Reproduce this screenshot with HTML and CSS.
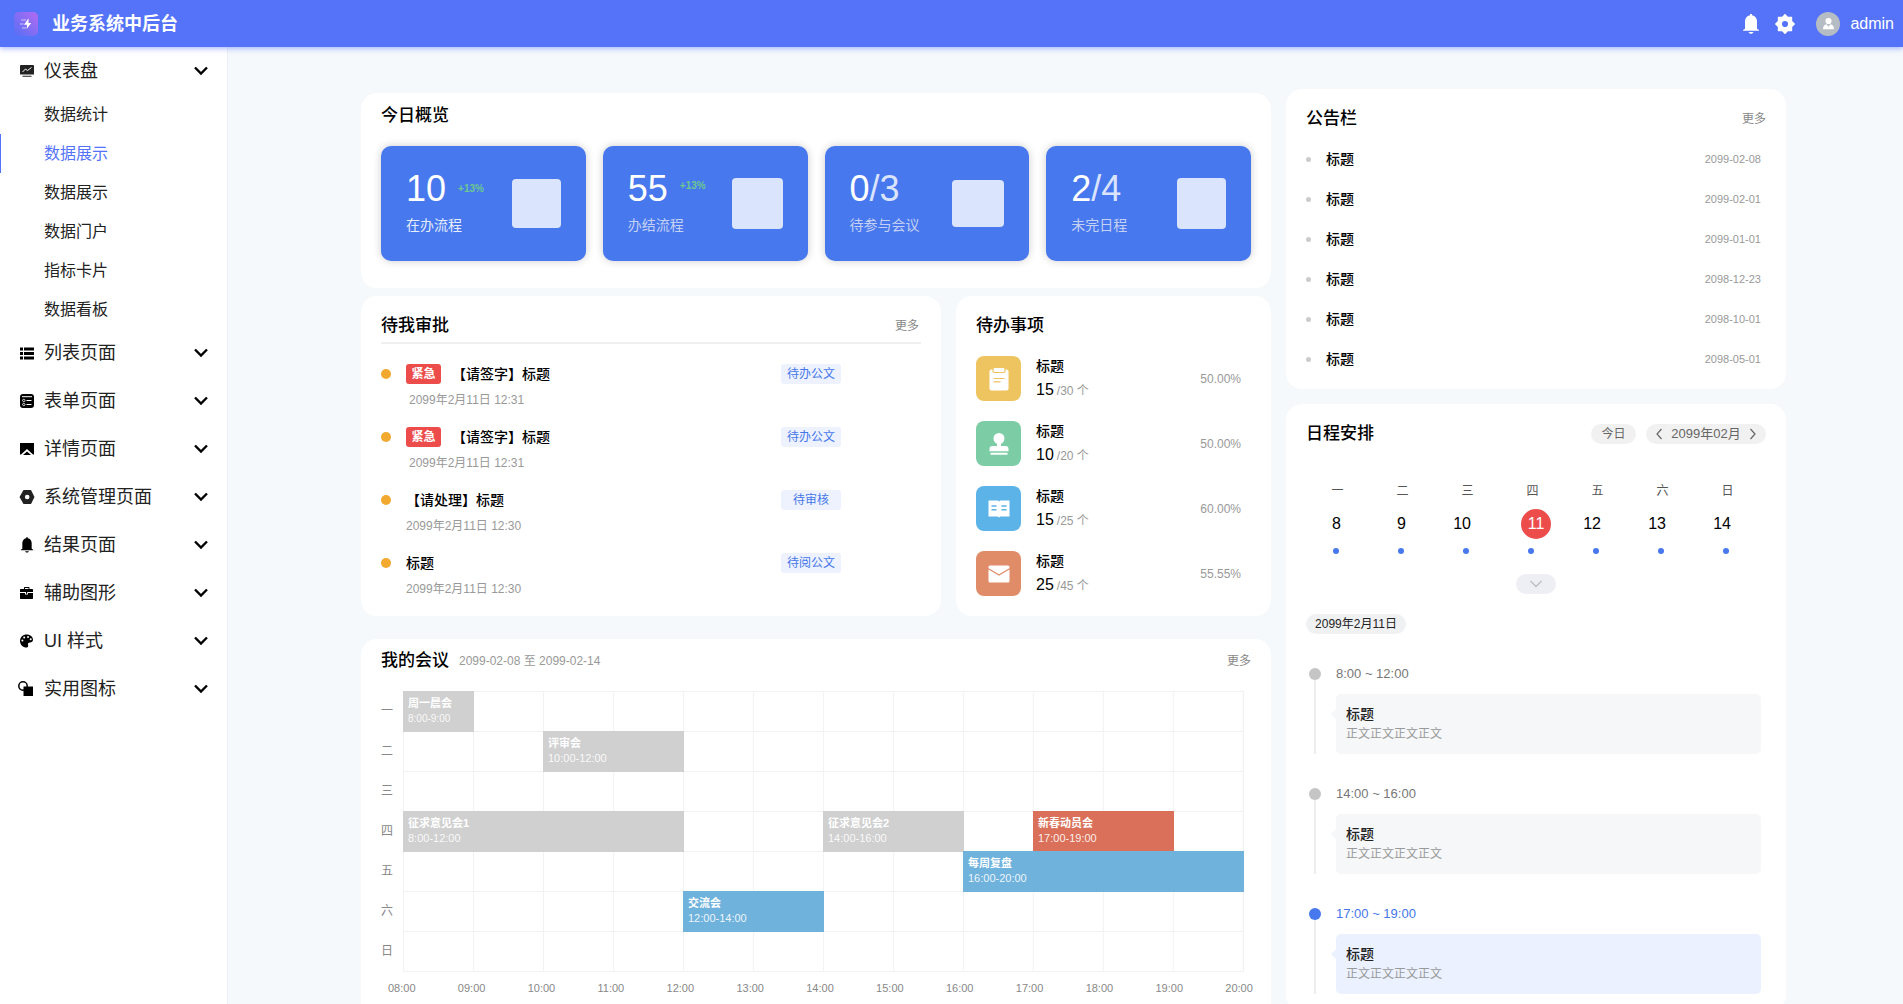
FILE: index.html
```html
<!DOCTYPE html>
<html lang="zh-CN">
<head>
<meta charset="utf-8">
<meta name="viewport" content="width=device-width, initial-scale=1">
<title>业务系统中后台</title>
<link rel="stylesheet" href="styles.css">
</head>
<body>
<svg width="0" height="0" class="sprite" aria-hidden="true">
  <symbol id="chevron" viewBox="0 0 14 10"><path d="M1 1.5 7 7.5 13 1.5" fill="none" stroke="currentColor" stroke-width="2.4"/></symbol>
  <symbol id="bell" viewBox="0 0 18 20"><path d="M8 0h2v1.3c3.300.6 5 3.200 5 6.200v7.200l2 1.300v.8H1V16l2-1.300V7.500C3 4.500 4.700 1.900 8 1.300zM6.500 18h5c-.5 1.200-1.400 1.800-2.500 1.800S7 19.200 6.500 18z" fill="currentColor"/></symbol>
</svg>

<header class="topbar">
  <svg class="logo" viewBox="0 0 24 24" aria-hidden="true">
    <defs><linearGradient id="logo-bg" x1="0" y1="1" x2="1" y2="0"><stop offset="0" stop-color="#5470f5"/><stop offset="1" stop-color="#b46af2"/></linearGradient></defs>
    <rect width="24" height="24" rx="5" fill="url(#logo-bg)"/>
    <path d="M7 8h5M6 12h3.500M8 16h4" stroke="#fff" stroke-opacity=".4" stroke-width="1.400"/>
    <path d="M14.500 6.200 10 12.800h3L12.700 17l4.500-6h-2.700z" fill="#fff"/>
  </svg>
  <h1 class="brand">业务系统中后台</h1>
  <div class="topbar-actions">
    <button class="icon-btn" aria-label="通知"><svg width="18" height="20"><use href="#bell"/></svg></button>
    <button class="icon-btn" aria-label="设置"><svg width="20" height="20" viewBox="0 0 20 20"><path fill="currentColor" stroke="currentColor" stroke-linejoin="round" stroke-width="1.500" fill-rule="evenodd" d="M10 .8 12.600 3.600 16.500 3.500 16.400 7.400 19.200 10 16.400 12.600 16.500 16.500 12.600 16.400 10 19.200 7.400 16.400 3.500 16.500 3.600 12.600.8 10 3.600 7.400 3.500 3.500 7.400 3.600zM10 6.200a3.800 3.800 0 1 0 0 7.600 3.800 3.800 0 0 0 0-7.600z"/></svg></button>
    <a class="user" href="#">
      <svg width="24" height="24" viewBox="0 0 24 24" aria-hidden="true"><circle cx="12" cy="12" r="12" fill="#b6bcc3"/><circle cx="12.500" cy="9" r="3.100" fill="#fff"/><path d="M7 17.200c0-3 1.500-4.700 3.500-4.900l2 2.500 2-2.500c2 .2 3.500 1.900 3.500 4.900z" fill="#fff"/></svg>
      <span>admin</span>
    </a>
  </div>
</header>

<div class="shell">
  <nav class="sidebar">
    <button class="menu-group"><svg class="menu-icon" viewBox="0 0 14 14"><path d="M1 1h12a1 1 0 0 1 1 1v8.500H0V2a1 1 0 0 1 1-1zM2.500 11.800h9v1h-9z" fill="#222"/><path d="M2.500 8 5.500 5 7.500 6.500 11.500 3.500" fill="none" stroke="#fff"/></svg><span>仪表盘</span><svg class="menu-arrow"><use href="#chevron"/></svg></button>
    <div class="submenu">
      <a href="#">数据统计</a>
      <a href="#" class="active">数据展示</a>
      <a href="#">数据展示</a>
      <a href="#">数据门户</a>
      <a href="#">指标卡片</a>
      <a href="#">数据看板</a>
    </div>
    <button class="menu-group"><svg class="menu-icon" viewBox="0 0 14 14"><path d="M0 1.500h3v3H0zM4 1.500h10v3H4zM0 6h3v3H0zM4 6h10v3H4zM0 10.500h3v3H0zM4 10.500h10v3H4z"/></svg><span>列表页面</span><svg class="menu-arrow"><use href="#chevron"/></svg></button>
    <button class="menu-group"><svg class="menu-icon" viewBox="0 0 14 14"><rect width="14" height="14" rx="3"/><path d="M2 2.700h10M6.500 6.500h5M6.500 10.500h5" stroke="#fff"/><circle cx="3.800" cy="6.500" r="1.200" fill="none" stroke="#fff" stroke-width=".8"/><circle cx="3.800" cy="10.500" r="1.200" fill="none" stroke="#fff" stroke-width=".8"/></svg><span>表单页面</span><svg class="menu-arrow"><use href="#chevron"/></svg></button>
    <button class="menu-group"><svg class="menu-icon" viewBox="0 0 14 14"><path d="M0 1h14v11.500h-1L7 7 1 12.500H0zM3 13l4-3.500 4 3.500z"/></svg><span>详情页面</span><svg class="menu-arrow"><use href="#chevron"/></svg></button>
    <button class="menu-group"><svg class="menu-icon" viewBox="0 0 14 14"><path fill="#222" fill-rule="evenodd" d="M3.500 0h7.500l3.500 7-3.500 7H3.500L-.5 7zM7.200 4.700a2.300 2.300 0 1 0 0 4.600 2.300 2.300 0 0 0 0-4.600z"/></svg><span>系统管理页面</span><svg class="menu-arrow"><use href="#chevron"/></svg></button>
    <button class="menu-group"><svg class="menu-icon menu-icon-tall"><use href="#bell"/></svg><span>结果页面</span><svg class="menu-arrow"><use href="#chevron"/></svg></button>
    <button class="menu-group"><svg class="menu-icon" viewBox="0 0 14 14"><path fill-rule="evenodd" d="M4 3V2c0-.6.400-1 1-1h3.500c.6 0 1 .4 1 1v1H12c.6 0 1 .4 1 1v2H0V4c0-.6.400-1 1-1zm1 0h3.500V2H5zM0 7h5v1.500h3V7h5v5c0 .6-.4 1-1 1H1c-.6 0-1-.4-1-1z"/><path d="M6 6h1.200v1.800H6z"/></svg><span>辅助图形</span><svg class="menu-arrow"><use href="#chevron"/></svg></button>
    <button class="menu-group"><svg class="menu-icon" viewBox="0 0 14 14"><path d="M6.500.5C10.500.5 13 3 13 5.800c0 2-1.500 2.700-3 2.700-1.500 0-2.500 1-2 2.200.5 1.300.2 2.800-1.500 2.800C3 13.500 0 10.800 0 7S3 .5 6.500.5z"/><g fill="#fff"><circle cx="2.400" cy="6.500" r="1"/><circle cx="4.200" cy="3.400" r="1"/><circle cx="8" cy="2.900" r="1"/><circle cx="10.700" cy="5.300" r="1"/></g></svg><span>UI 样式</span><svg class="menu-arrow"><use href="#chevron"/></svg></button>
    <button class="menu-group"><svg class="menu-icon" viewBox="0 0 14 14"><circle cx="3" cy="4" r="4.200" fill="#fff" stroke="#000" stroke-width="1.500"/><path d="M3.500 4.500H13V14H3.500z"/></svg><span>实用图标</span><svg class="menu-arrow"><use href="#chevron"/></svg></button>
  </nav>

  <main class="content">
    <div class="board">
      <div class="primary">
        <section class="card overview">
          <h2>今日概览</h2>
          <div class="stats">
            <div class="stat"><div class="stat-text"><p class="stat-value">10<small>+13%</small></p><p class="stat-label bright">在办流程</p></div><span class="thumb thumb-small"></span></div>
            <div class="stat"><div class="stat-text"><p class="stat-value">55<small class="raised">+13%</small></p><p class="stat-label">办结流程</p></div><span class="thumb thumb-large"></span></div>
            <div class="stat"><div class="stat-text"><p class="stat-value">0<span>/3</span></p><p class="stat-label">待参与会议</p></div><span class="thumb thumb-wide"></span></div>
            <div class="stat"><div class="stat-text"><p class="stat-value">2<span>/4</span></p><p class="stat-label">未完日程</p></div><span class="thumb thumb-tall"></span></div>
          </div>
        </section>

        <div class="pair">
          <section class="card approvals">
            <div class="card-head ruled"><h2>待我审批</h2><a class="more" href="#">更多</a></div>
            <ul class="approval-list">
              <li><i class="dot"></i><div class="approval-main"><p class="approval-title"><b class="urgent">紧急</b>【请签字】标题</p><time class="inset">2099年2月11日 12:31</time></div><span class="status">待办公文</span></li>
              <li><i class="dot"></i><div class="approval-main"><p class="approval-title"><b class="urgent">紧急</b>【请签字】标题</p><time class="inset">2099年2月11日 12:31</time></div><span class="status">待办公文</span></li>
              <li><i class="dot"></i><div class="approval-main"><p class="approval-title">【请处理】标题</p><time>2099年2月11日 12:30</time></div><span class="status">待审核</span></li>
              <li><i class="dot"></i><div class="approval-main"><p class="approval-title">标题</p><time>2099年2月11日 12:30</time></div><span class="status">待阅公文</span></li>
            </ul>
          </section>

          <section class="card todos">
            <h2>待办事项</h2>
            <ul class="todo-list">
              <li><span class="tile yellow"><svg viewBox="0 0 24 24"><rect x="2.500" y="2.500" width="19" height="21" rx="2" fill="#fff"/><rect x="6" y=".5" width="12" height="5" rx="1.500" fill="#fff" stroke="#eec460" stroke-width="1.200"/><path d="M6.500 11.500h11M6.500 14.800h7" stroke="#eec460" stroke-width="1.200"/></svg></span><div class="todo-main"><p class="todo-title">标题</p><p class="todo-count"><strong>15</strong>/30 个</p></div><span class="percent">50.00%</span></li>
              <li><span class="tile green"><svg viewBox="0 0 24 24"><circle cx="12" cy="6.500" r="5.500" fill="#fff"/><path d="M10 9h4v5h4.500a3 3 0 0 1 3 3v2.200h-19V17a3 3 0 0 1 3-3H10zM3.500 20.800h17v2h-17z" fill="#fff"/></svg></span><div class="todo-main"><p class="todo-title">标题</p><p class="todo-count"><strong>10</strong>/20 个</p></div><span class="percent">50.00%</span></li>
              <li><span class="tile blue"><svg viewBox="0 0 24 24"><path d="M1.500 3.500h8.500c1 0 1.700.5 2 1.200.3-.7 1-1.200 2-1.200h8.500v16H14c-.8 0-1.300.5-2 1-.7-.5-1.200-1-2-1H1.500z" fill="#fff"/><path d="M4.500 9h5M14.500 9h5M4.500 12.700h5M14.500 12.700h5" stroke="#5cb3e8" stroke-width="1.400"/></svg></span><div class="todo-main"><p class="todo-title">标题</p><p class="todo-count"><strong>15</strong>/25 个</p></div><span class="percent">60.00%</span></li>
              <li><span class="tile orange"><svg viewBox="0 0 24 24"><rect x="1.500" y="3.500" width="21" height="17" rx="1.500" fill="#fff"/><path d="M1 6.500l11 6.500 11-6.500" fill="none" stroke="#e08c69" stroke-width="1.300"/></svg></span><div class="todo-main"><p class="todo-title">标题</p><p class="todo-count"><strong>25</strong>/45 个</p></div><span class="percent">55.55%</span></li>
            </ul>
          </section>
        </div>

        <section class="card meetings">
          <div class="card-head"><h2>我的会议</h2><span class="range">2099-02-08 至 2099-02-14</span><a class="more" href="#">更多</a></div>
          <div class="planner">
            <div class="days"><span>一</span><span>二</span><span>三</span><span>四</span><span>五</span><span>六</span><span>日</span></div>
            <div class="slots">
              <div class="event mon"><b>周一晨会</b><span class="compact">8:00-9:00</span></div>
              <div class="event tue"><b>评审会</b><span>10:00-12:00</span></div>
              <div class="event thu-am"><b>征求意见会1</b><span>8:00-12:00</span></div>
              <div class="event thu-pm"><b>征求意见会2</b><span>14:00-16:00</span></div>
              <div class="event red thu-late"><b>新春动员会</b><span>17:00-19:00</span></div>
              <div class="event sky fri"><b>每周复盘</b><span>16:00-20:00</span></div>
              <div class="event sky sat"><b>交流会</b><span>12:00-14:00</span></div>
            </div>
          </div>
          <div class="hours"><span>08:00</span><span>09:00</span><span>10:00</span><span>11:00</span><span>12:00</span><span>13:00</span><span>14:00</span><span>15:00</span><span>16:00</span><span>17:00</span><span>18:00</span><span>19:00</span><span>20:00</span></div>
        </section>
      </div>

      <aside class="secondary">
        <section class="card notices">
          <div class="card-head"><h2>公告栏</h2><a class="more" href="#">更多</a></div>
          <ul class="notice-list">
            <li><a href="#">标题</a><time>2099-02-08</time></li>
            <li><a href="#">标题</a><time>2099-02-01</time></li>
            <li><a href="#">标题</a><time>2099-01-01</time></li>
            <li><a href="#">标题</a><time>2098-12-23</time></li>
            <li><a href="#">标题</a><time>2098-10-01</time></li>
            <li><a href="#">标题</a><time>2098-05-01</time></li>
          </ul>
        </section>

        <section class="card agenda">
          <div class="card-head">
            <h2>日程安排</h2>
            <button class="pill today">今日</button>
            <div class="pill month">
              <button class="step" aria-label="上个月"><svg width="6" height="12" viewBox="0 0 6 12"><path d="M5.500 1 1 6l4.500 5" fill="none" stroke="currentColor" stroke-width="1.200"/></svg></button>
              <span>2099年02月</span>
              <button class="step" aria-label="下个月"><svg width="6" height="12" viewBox="0 0 6 12"><path d="M.5 1 5 6 .5 11" fill="none" stroke="currentColor" stroke-width="1.200"/></svg></button>
            </div>
          </div>
          <div class="week">
            <div class="day"><span class="weekday">一</span><span class="num">8</span><i></i></div>
            <div class="day"><span class="weekday">二</span><span class="num">9</span><i></i></div>
            <div class="day"><span class="weekday">三</span><span class="num">10</span><i></i></div>
            <div class="day"><span class="weekday">四</span><span class="num current">11</span><i></i></div>
            <div class="day"><span class="weekday">五</span><span class="num">12</span><i></i></div>
            <div class="day"><span class="weekday">六</span><span class="num">13</span><i></i></div>
            <div class="day"><span class="weekday">日</span><span class="num">14</span><i></i></div>
          </div>
          <button class="expand" aria-label="展开"><svg width="12" height="8" viewBox="0 0 12 8"><path d="M.5 1 6 6.500 11.500 1" fill="none" stroke="#bcbcc4" stroke-width="1.300"/></svg></button>
          <span class="date-pill">2099年2月11日</span>
          <ol class="timeline">
            <li><time>8:00 ~ 12:00</time><div class="entry"><h3>标题</h3><p>正文正文正文正文</p></div></li>
            <li><time>14:00 ~ 16:00</time><div class="entry"><h3>标题</h3><p>正文正文正文正文</p></div></li>
            <li class="now"><time>17:00 ~ 19:00</time><div class="entry"><h3>标题</h3><p>正文正文正文正文</p></div></li>
          </ol>
        </section>
      </aside>
    </div>
  </main>
</div>
</body>
</html>
```
FILE: styles.css
```css
* { box-sizing: border-box; }

body {
  margin: 0;
  height: 100vh;
  display: flex;
  flex-direction: column;
  overflow: hidden;
  background: #f5f9fc;
  color: #000;
  font: 14px/20px "Liberation Sans", "Noto Sans CJK SC", sans-serif;
}

h1, h2, h3, p, ul, ol { margin: 0; padding: 0; }
ul, ol { list-style: none; }
a { color: inherit; text-decoration: none; }
button { margin: 0; padding: 0; border: 0; background: none; color: inherit; font: inherit; cursor: pointer; }
svg { display: block; }
.sprite { position: absolute; }

/* top bar */
.topbar {
  display: flex;
  flex: none;
  align-items: center;
  height: 47px;
  padding: 0 9px 0 14px;
  background: #5473f9;
  color: #fff;
  box-shadow: 0 1px 6px rgba(84, 115, 249, .6);
  z-index: 1;
}
.logo { width: 24px; height: 24px; margin-right: 14px; }
.brand { font-size: 18px; line-height: 24px; font-weight: 700; }
.topbar-actions { display: flex; align-items: center; gap: 15px; margin-left: auto; }
.user { display: flex; align-items: center; gap: 10px; margin-left: 6px; font-size: 16px; }

.shell { display: flex; flex: 1; min-height: 0; }

/* side menu */
.sidebar {
  flex: none;
  width: 228px;
  border-right: 1px solid #edf0f5;
  background: #fff;
  overflow: hidden;
}
.menu-group {
  display: flex;
  align-items: center;
  gap: 10px;
  width: 100%;
  height: 48px;
  padding: 0 19px 0 20px;
  color: #000;
  font-size: 18px;
  text-align: left;
}
.menu-group span { flex: 1; color: #222; }
.menu-icon { width: 14px; height: 14px; overflow: visible; }
.menu-icon-tall { height: 16px; }
.menu-arrow { width: 14px; height: 10px; }
.submenu a {
  display: flex;
  align-items: center;
  height: 39px;
  padding-left: 43px;
  border-left: 1px solid transparent;
  color: #222;
  font-size: 16px;
}
.submenu .active { border-color: #5473f9; color: #5473f9; }

/* board */
.content { flex: 1; overflow: auto; scrollbar-width: none; padding: 42px 16px 20px 32px; }
.board {
  display: grid;
  grid-template-columns: 910fr 500fr;
  gap: 15px;
  align-items: start;
  max-width: 1425px;
  margin: 0 auto;
}
.primary { margin-top: 4px; }
.secondary { display: grid; gap: 15px; }
.card { padding: 17px 20px; border-radius: 16px; background: #fff; }
.card h2 { font-size: 17px; line-height: 26px; font-weight: 500; }
.card-head { display: flex; align-items: center; }
.more { margin-left: auto; color: #888; font-size: 12px; }

/* overview */
.overview { padding: 10px 20px 27px; }
.stats { display: grid; grid-template-columns: repeat(4, 1fr); gap: 17px; margin-top: 17px; }
.stat {
  display: flex;
  align-items: center;
  justify-content: space-between;
  height: 115px;
  padding: 0 25px;
  border-radius: 10px;
  background: #4778ee;
  box-shadow: 0 0 8px rgba(0, 0, 0, .2);
  color: #fff;
}
.stat-text { padding-bottom: 3px; }
.stat-value { display: flex; align-items: center; font-size: 36px; line-height: 40px; margin-bottom: 6px; }
.stat-value span { color: #dbe4fd; }
.stat-value small { margin-left: 12px; color: #6cc791; font-size: 10px; line-height: 16px; font-weight: 700; }
.stat-value .raised { padding-bottom: 6px; }
.stat-label { color: #c5d1f3; font-size: 14px; }
.stat-label.bright { color: #e6edfd; }
.thumb { width: 49px; height: 49px; border-radius: 4px; background: #dbe4fd; }
.thumb-large { width: 51px; height: 51px; }
.thumb-wide { width: 52px; height: 47px; }
.thumb-tall { height: 51px; }

.pair { display: grid; grid-template-columns: 580fr 315fr; gap: 15px; margin: 8px 0 23px; }

/* approvals */
.ruled { padding-bottom: 3px; border-bottom: 2px solid #f0f0f0; }
.ruled .more { padding-right: 2px; }
.approval-list { display: grid; gap: 17px; padding-top: 20px; }
.approval-list li { display: flex; align-items: flex-start; gap: 15px; padding-right: 80px; }
.dot { width: 10px; height: 10px; margin-top: 5px; border-radius: 50%; background: #f2a92f; }
.approval-main { flex: 1; }
.approval-title { display: flex; font-weight: 500; margin-bottom: 6px; }
.urgent {
  width: 35px;
  margin-right: 11px;
  border-radius: 3px;
  background: #ec4d4b;
  color: #fff;
  font-size: 12px;
  text-align: center;
}
.approval-main time { display: block; color: #999; font-size: 12px; }
.approval-main .inset { padding-left: 3px; }
.status { width: 60px; border-radius: 3px; background: #edf2fe; color: #4577ea; font-size: 12px; text-align: center; }

/* to-do items */
.todo-list { display: grid; gap: 20px; margin-top: 17px; }
.todo-list li { display: flex; align-items: center; gap: 15px; padding-right: 10px; }
.tile { display: grid; place-items: center; width: 45px; height: 45px; border-radius: 8px; }
.tile svg { width: 24px; height: 24px; }
.yellow { background: #eec460; }
.green { background: #7ccca5; }
.blue { background: #5cb3e8; }
.orange { background: #e08c69; }
.todo-main { flex: 1; }
.todo-title { font-weight: 500; margin-bottom: 4px; }
.todo-count { color: #999; font-size: 12px; }
.todo-count strong { margin-right: 3px; color: #000; font-size: 16px; font-weight: 500; }
.percent { color: #999; font-size: 12px; }

/* meetings */
.meetings { padding: 9px 20px 24px; }
.range { margin-left: 10px; color: #999; font-size: 12px; }
.planner { display: flex; margin: 17px 7px 8px 0; }
.days { display: grid; grid-template-rows: repeat(7, 40px); width: 22px; align-items: center; color: #888; font-size: 12px; }
.slots {
  display: grid;
  flex: 1;
  grid-template: repeat(7, 40px) / repeat(12, 1fr);
  border: solid #f2f2f2;
  border-width: 0 1px 1px 0;
  background:
    linear-gradient(#f2f2f2 1px, transparent 1px) 0 0 / 100% 40px,
    linear-gradient(90deg, #f2f2f2 1px, transparent 1px) 0 0 / calc(100% / 12) 100%;
}
.event {
  display: flex;
  flex-direction: column;
  margin: 0 -1px -1px 0;
  padding: 5px;
  background: #d0d0d0;
  color: #fff;
  font-size: 11px;
  line-height: 15px;
}
.event b { font-weight: 700; }
.event span { color: rgba(255, 255, 255, .9); }
.event .compact { font-size: 10px; }
.event.red { background: #da7059; }
.event.sky { background: #6fb2dc; }
.mon { grid-area: 1 / 1 / 2 / 2; }
.tue { grid-area: 2 / 3 / 3 / 5; }
.thu-am { grid-area: 4 / 1 / 5 / 5; }
.thu-pm { grid-area: 4 / 7 / 5 / 9; }
.thu-late { grid-area: 4 / 10 / 5 / 12; }
.fri { grid-area: 5 / 9 / 6 / 13; }
.sat { grid-area: 6 / 5 / 7 / 7; }
.hours { display: flex; justify-content: space-between; margin: 0 -2px 0 7px; color: #888; font-size: 11px; line-height: 16px; }

/* notices */
.notices { padding-bottom: 10px; }
.notice-list { margin-top: 7px; }
.notice-list li { display: flex; align-items: center; height: 40px; padding-right: 5px; }
.notice-list li::before { content: ""; width: 5px; height: 5px; margin-right: 15px; border-radius: 50%; background: #ccc; }
.notice-list a { flex: 1; font-weight: 500; }
.notice-list time { color: #999; font-size: 11px; }

/* agenda */
.pill { height: 20px; border-radius: 10px; background: #f1f1f1; color: #666; }
.today { width: 45px; margin: 0 10px 0 auto; font-size: 12px; }
.month { display: flex; align-items: center; justify-content: space-between; width: 120px; padding: 0 10px; font-size: 13px; }
.week { display: grid; grid-template-columns: repeat(7, 1fr); margin: 34px 5px 20px 0; }
.day { display: flex; flex-direction: column; }
.weekday { margin-bottom: 8px; padding-right: 2px; color: #555; font-size: 12px; text-align: center; }
.num { height: 30px; margin-bottom: 9px; padding-right: 30px; font-size: 16px; line-height: 30px; text-align: right; }
.num.current { width: 30px; margin-left: 20px; padding: 0; border-radius: 50%; background: #ec4d4b; color: #fff; text-align: center; }
.day i { width: 6px; height: 6px; margin-left: 27px; border-radius: 50%; background: #4778ee; }
.expand { display: grid; place-items: center; width: 40px; height: 20px; margin: 0 auto 20px; border-radius: 10px; background: #eeeff4; }
.date-pill { display: block; width: 100px; border-radius: 10px; background: #f0f1f3; color: #222; font-size: 12px; text-align: center; }
.timeline { display: grid; gap: 30px; margin: 30px 5px 0 3px; }
.timeline li { position: relative; padding-left: 27px; }
.timeline li::before { content: ""; position: absolute; left: 5px; top: 10px; bottom: 0; width: 2px; background: #eee; }
.timeline li::after { content: ""; position: absolute; left: 0; top: 4px; width: 12px; height: 12px; border-radius: 50%; background: #c5c5c5; }
.timeline time { display: block; margin-bottom: 10px; color: #777; font-size: 13px; }
.entry { position: relative; padding: 10px; border-radius: 5px; background: #f6f7f9; }
.entry::before {
  content: "";
  position: absolute;
  left: -5px;
  top: 15px;
  border: solid transparent;
  border-width: 5px 5px 5px 0;
  border-right-color: #f6f7f9;
}
.entry h3 { color: #222; font-size: 14px; font-weight: 500; }
.entry p { color: #999; font-size: 12px; }
.timeline .now::after { background: #4778ee; }
.now time { color: #4577ea; }
.now .entry { background: #ebf1fe; }
.now .entry::before { border-right-color: #ebf1fe; }
```
